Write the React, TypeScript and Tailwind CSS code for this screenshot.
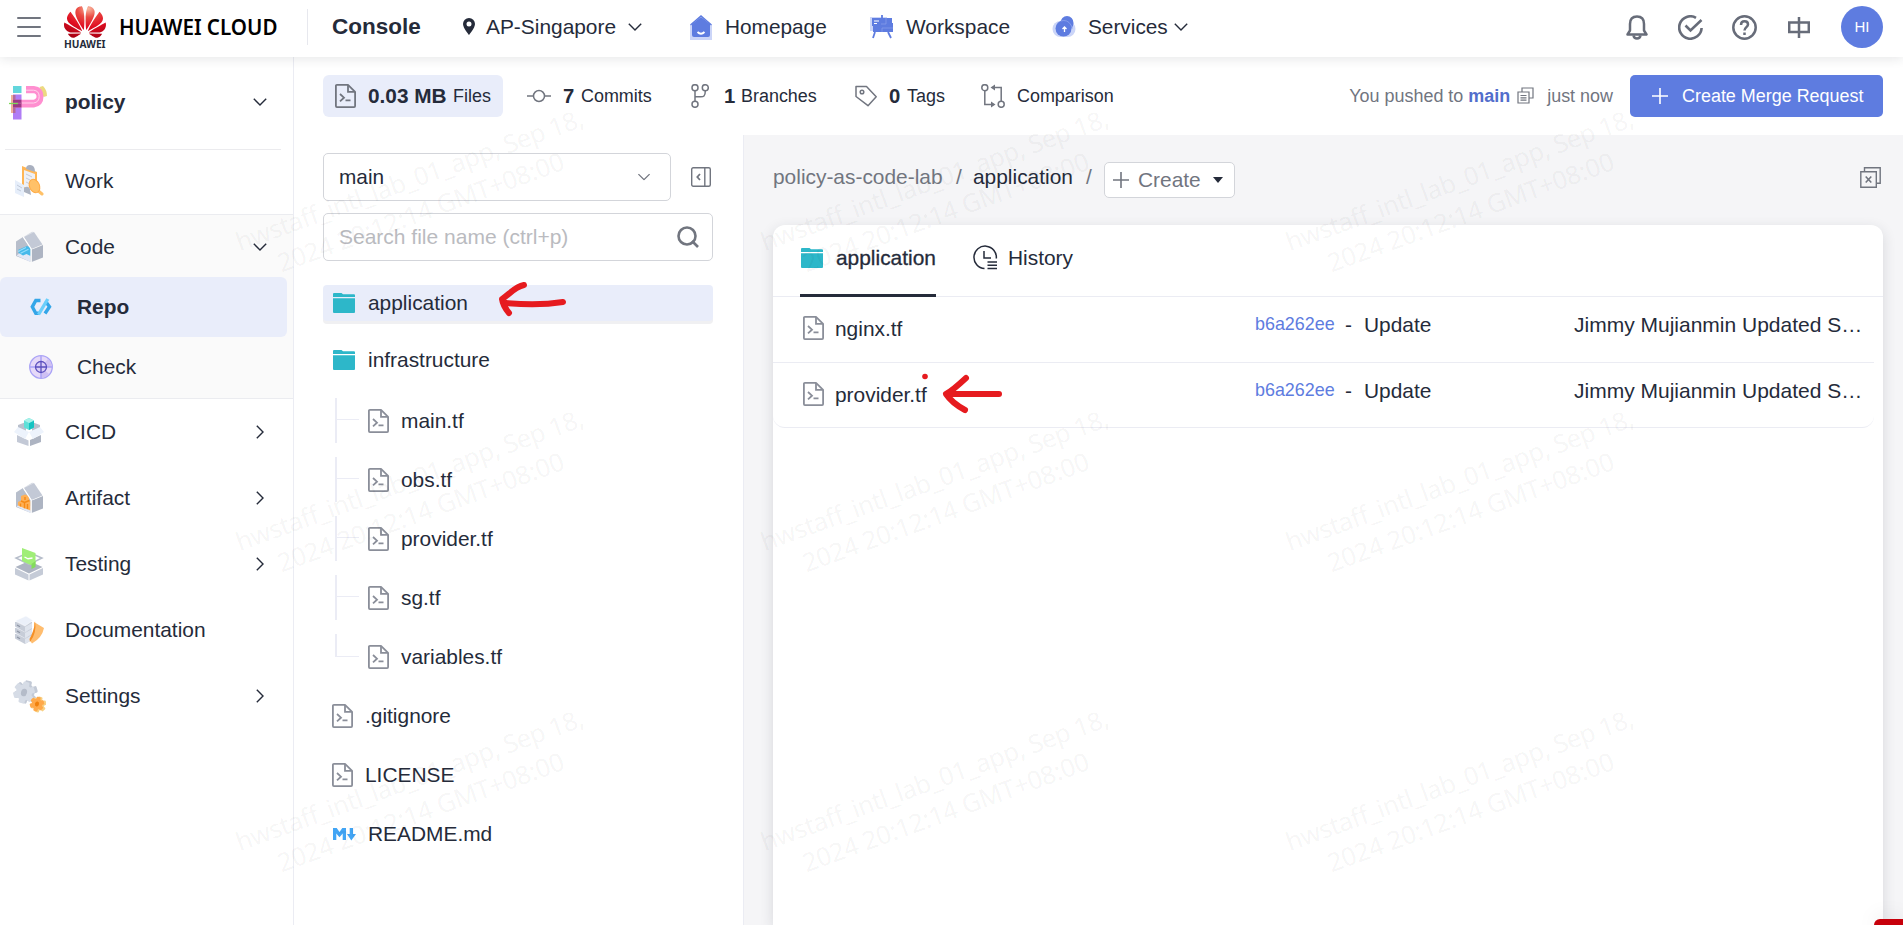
import React from "react";
import { SiHuawei } from "react-icons/si";

type P = { className?: string };

const ChevronDown = ({ className = "" }: P) => (
  <svg viewBox="0 0 14 8" className={`h-2 w-3.5 shrink-0 ${className}`} fill="none" stroke="currentColor" strokeWidth="1.4">
    <path d="M.8.8 7 7 13.2.8" />
  </svg>
);

const ChevronRight = ({ className = "" }: P) => (
  <svg viewBox="0 0 8 14" className={`h-3.5 w-2 shrink-0 ${className}`} fill="none" stroke="currentColor" strokeWidth="1.4">
    <path d="M.8.8 7 7 .8 13.2" />
  </svg>
);

const FileIcon = ({ className = "text-[#8a8e99]" }: P) => (
  <svg viewBox="0 0 21 24" className={`h-6 w-[21px] shrink-0 ${className}`} fill="none" stroke="currentColor" strokeWidth="1.800">
    <path d="M1.900.9H13l7.100 7v14.200a1 1 0 0 1-1 1H1.900a1 1 0 0 1-1-1V1.900a1 1 0 0 1 1-1Z" strokeLinejoin="round" />
    <path d="M13 1v6.800h7" />
    <path d="m5 10 4 3.700-4 3.700M10.500 16.300h5" />
  </svg>
);

const Folder = ({ className = "" }: P) => (
  <svg viewBox="0 0 22 20" className={`h-5 w-[22px] shrink-0 ${className}`} fill="#2db7c9">
    <path d="M1 0h7.500l1.500 1.200H21q1 0 1 1V4H0V1Q0 0 1 0Z" />
    <path d="M0 5.200h22V19q0 1-1 1H1q-1 0-1-1Z" />
  </svg>
);

const Menu = () => (
  <svg viewBox="0 0 24 22" className="h-[22px] w-6" stroke="#71757f" strokeWidth="2" strokeLinecap="round">
    <path d="M1 2h22M1 11h22M1 20h22" />
  </svg>
);

const PolicyLogo = () => (
  <svg viewBox="0 0 40 36" className="h-9 w-10 shrink-0">
    <path d="M30.500 2 34 1q4 4 4 10l-3.500 1Z" fill="#ecd980" />
    <rect x="4" y="1" width="8.500" height="7" fill="#62d6dc" />
    <rect x="4" y="9.500" width="8.500" height="25" fill="#b07df5" />
    <rect x="2" y="10" width="2.500" height="18" fill="#f2b09a" />
    <rect x="4" y="10" width="2.500" height="18" fill="#b36a9c" />
    <path d="M17 1h8q9.500 1 9.500 10.500T25 22.500H4v-7.800h20.500q3-.7 3-3.200 0-2.800-3-3.200H17Z" fill="#ff8fd0" />
    <path d="M17 5.200h7.500q5.700.5 5.700 6.300t-5.700 6.500H8" fill="none" stroke="#ffd3ec" strokeWidth="1" />
    <path d="M4 14.700h8.500v7.800H4Z" fill="#9c3a85" />
    <path d="M4 18.200h8.500" stroke="#c45ea5" />
    <path d="M0 18.500h9" stroke="#7cd957" strokeWidth="1.300" />
  </svg>
);

const WorkIcon = () => (
  <svg viewBox="0 0 30 32" className="h-8 w-[30px]">
    <path d="M8 1 23 7v20L8 22Z" fill="#ffb655" />
    <path d="m10 5 11 4v17l-11-4Z" fill="#eef0f5" />
    <path d="M12 4q0-4 4-4 5 0 5 7Z" fill="#a9b0bf" />
    <path d="m12 9 6 3m-6 1 6 3m-6 1 4 2" stroke="#c5cad5" />
    <path d="M1 15 10 20v12L1 28Z" fill="#e6eefa" />
    <path d="m3 20 5 3m-5 1 4 2" stroke="#c1cad9" />
    <path d="M10 23q4-3 6 1l1 6-7-3Z" fill="#adb4c1" />
    <path d="m22 24 6 5" stroke="#ffc168" strokeWidth="3" strokeLinecap="round" />
    <ellipse cx="20.500" cy="21" rx="5" ry="7" transform="rotate(-25 20.500 21)" fill="#ffc168" stroke="#ffa941" />
  </svg>
);

const House = ({ children }: { children: React.ReactNode }) => (
  <svg viewBox="0 0 30 32" className="h-8 w-[30px]">
    <path d="M2 10.500 9 6l8 12v13L2 25Z" fill="#b7becb" />
    <path d="m2.500 24.500 6-4.500 8 4v7Z" fill="#e1e8f6" />
    {children}
    <path d="m17.500 18.500 3-1L29 14v12.500L17.500 31Z" fill="#adb4c2" />
    <path d="M2 10.500 18 .8l2 .2L9.500 6Z" fill="#d5dae3" />
    <path d="M9.800 6 20 1l8.500 12.500-11 4.500Z" fill="#c3c9d6" />
    <path d="m9.300 6 7.800 12v13" fill="none" stroke="#fff" strokeWidth="1.200" />
  </svg>
);

const CodeIcon = () => (
  <House>
    <path d="m4 19 9-4 3.500 1.500V25l-4-2-3.500 1.500-5-3 2-.8Z" fill="#45b9ea" />
    <path d="m4 20.500 8-4m-5.500 5.700 8-4" stroke="#92ddfc" strokeWidth="1.200" />
  </House>
);

const ArtifactIcon = () => (
  <House>
    <path d="m4 20 3-1.500V14l4-1.500 4 1.500v4.500l1.500.7V28.500L11 26.500l-7-3Z" fill="#ffb056" />
    <path d="M10.500 20v6.300M7 19l3.500 1.500 5-2M6.500 24.500v-3M13.500 27v-5M11 18v-3" fill="none" stroke="#f58a17" strokeWidth="1.400" />
  </House>
);

const RepoIcon = () => (
  <svg viewBox="0 0 22 18" className="h-[18px] w-[22px]" fill="none" strokeWidth="3.400">
    <path d="M10.500 2.500H5.800L2.300 8.800l3.500 6.400h3" stroke="#34a6e8" />
    <path d="m15.500 3.200 4 5.500-4.500 6.800" stroke="#34a6e8" />
    <path d="m17.800 1-9.300 15.500" stroke="#6bcffb" />
  </svg>
);

const CheckIcon = () => (
  <svg viewBox="0 0 24 24" className="size-6">
    <circle cx="12" cy="12" r="11.300" fill="#e6d9f8" stroke="#aaa3f6" strokeWidth="1.300" />
    <path d="M12 12h11A11 11 0 0 0 19 4ZM12 12v11a11 11 0 0 0 8-4Z" fill="#cfc0f3" />
    <path d="M12 1v22M1 12h22" stroke="#aaa3f6" strokeWidth="1.500" />
    <circle cx="12" cy="12" r="5.500" fill="#dacdf7" stroke="#5b4fbe" strokeWidth="1.300" />
    <path d="M12 6v12M6 12h12" stroke="#5b4fbe" strokeWidth="1.300" />
  </svg>
);

const CicdIcon = () => (
  <svg viewBox="0 0 30 30" className="h-[30px] w-[30px]">
    <path d="m4 8 8-3v9L4 12ZM26 8l-8-3v9l8-2Z" fill="#b9c0cd" />
    <path d="m3 18 11.500 5.500V29L3 25Z" fill="#c3c9d6" />
    <path d="m27 18-11 5v6l11-4Z" fill="#adb4c2" />
    <path d="M4 10 15 15l-4 7L0 15ZM26 10l-11 5 4 7 11-7Z" fill="#edf3fc" />
    <path d="m15 1 5 2.500v7L15 13l-5-2.500v-7Z" fill="#5fe0d8" />
    <path d="m15 6 5-2.500v7L15 13Z" fill="#14c3c2" />
    <path d="m15 1 5 2.500L15 6l-5-2.500Z" fill="#a9f1e9" />
  </svg>
);

const TestingIcon = () => (
  <svg viewBox="0 0 30 34" className="h-[34px] w-[30px]">
    <path d="m15 14 13.500 6L15 26.500 1.500 20Z" fill="#adb4c2" />
    <path d="m1 21 13.500 6.500v6L1 27.500Z" fill="#c5cbd7" />
    <path d="M29 21 15.500 27.500v6L29 27.500Z" fill="#c5cbd7" />
    <path d="m15 5.500 13 5.500-13 6.500L2 11Z" fill="#fff" stroke="#b6bdca" strokeWidth="1.500" />
    <path d="m8 1 13.500 5v11l-5 1L8 14Z" fill="#a0ee77" />
    <path d="M17.500 17v5l4-2v-6Z" fill="#83dc5b" />
    <path d="m10.500 10 3.500 1.800 4.500-.8" fill="none" stroke="#fff" strokeWidth="1.400" />
  </svg>
);

const DocsIcon = () => (
  <svg viewBox="0 0 30 28" className="h-7 w-[30px]">
    {[12, 6, 0].map((y) => (
      <g key={y} transform={`translate(0 ${y})`}>
        <path d="M1 6v4.500l10 5.500 7-4V6Z" fill="#c7cdd8" />
        <path d="m11 11 7-4v5l-7 4Z" fill="#dfe4ed" />
        <path d="m1 5 11-5 7 4.500-8 5.500Z" fill="#ebf0f9" stroke="#fff" strokeWidth=".5" />
        <path d="M3 9 6 10.800" stroke="#8f97a6" strokeWidth="1.300" />
      </g>
    ))}
    <path d="m20 6 10 6q-2 10-12 15.500l-2-3Q21 16 20 6Z" fill="#ffbd6f" />
    <path d="M21 5q2 12-5 21l-.5-3Q20.500 14 21 5Z" fill="#f58f25" />
  </svg>
);

const Gear = ({ fill, hub, x, y, s }: { fill: string; hub: string; x: number; y: number; s: number }) => (
  <g transform={`translate(${x} ${y}) rotate(15) scale(${s})`}>
    {[0, 60, 120].map((a) => (
      <rect key={a} x="-3.500" y="-12" width="7" height="24" rx="1.500" fill={fill} transform={`rotate(${a})`} />
    ))}
    <circle r="9" fill={fill} />
    <ellipse rx="3.300" ry="4.300" fill={hub} />
  </g>
);

const SettingsIcon = () => (
  <svg viewBox="0 0 33 34" className="-ml-px h-[34px] w-[33px]">
    <Gear fill="#c3cad6" hub="#aab1be" x={13} y={13} s={0.96} />
    <Gear fill="#d6dce6" hub="#b5bcc9" x={11} y={13.500} s={0.9} />
    <Gear fill="#f8d083" hub="#f58a1c" x={25.500} y={25.500} s={0.66} />
    <Gear fill="#ffa94a" hub="#f0800c" x={24} y={25} s={0.6} />
  </svg>
);

const HomeNav = () => (
  <svg viewBox="0 0 22 25" className="h-[25px] w-[22px] shrink-0">
    <path d="M0 10h22v15H0Z" fill="#cbd5f8" />
    <path d="M2 9 11 2l9 7v11q0 2-2 2H4q-2 0-2-2Z" fill="#5e7ce0" />
    <path d="M.5 10 11 1l10.500 9" fill="none" stroke="#5e7ce0" strokeWidth="1.500" />
    <path d="M7.500 17q3.500 3.500 7 0" fill="none" stroke="#fff" strokeWidth="1.800" />
  </svg>
);

const WorkspaceNav = () => (
  <svg viewBox="0 0 24 24" className="size-6 shrink-0">
    <path d="M0 2h17v14H0Z" fill="#cbd5f8" />
    <path d="M2 3h20v5h1v9H3v-6H2Z" fill="#5e7ce0" />
    <path d="M12 0v4M5 17l-2 6M18 17l3 6" stroke="#5e7ce0" strokeWidth="1.800" />
    <path d="M4 6h5M4 8.500h3" stroke="#fff" />
    <path d="M11 9h5V3M12 17v-4h11" fill="none" stroke="#91a5ec" strokeWidth=".6" />
  </svg>
);

const ServicesNav = () => (
  <svg viewBox="0 0 24 22" className="h-[22px] w-6 shrink-0">
    <rect x=".5" y="5" width="23" height="16" rx="8" fill="#cbd5f8" />
    <ellipse cx="15" cy="7" rx="6.500" ry="7" fill="#5e7ce0" />
    <circle cx="11.500" cy="12.500" r="8" fill="#5e7ce0" />
    <path d="M8.500 5q7-2 10.500 4l1.500 3.500" fill="none" stroke="#91a5ec" strokeWidth=".8" />
    <path d="M12.500 16V11m-2 2 2-2 2 2" fill="none" stroke="#fff" strokeWidth="1.300" />
  </svg>
);

const Header = () => (
  <header className="relative z-10 flex h-[57px] shrink-0 items-center bg-white pr-5 pb-[3px] text-[20.800px] text-[#252b3a] shadow-[0_2px_10px_rgba(37,43,58,0.11)]">
    <div className="flex w-16 items-center pl-[17px]"><Menu /></div>
    <div className="-mt-[3px] flex w-[55px] flex-col items-start">
      <svg className="absolute size-0">
        <defs>
          <radialGradient id="petal" cx=".58" cy=".08" r=".95">
            <stop offset="0" stopColor="#f9b9a0" />
            <stop offset=".28" stopColor="#ea4a42" />
            <stop offset=".6" stopColor="#e00f22" />
            <stop offset="1" stopColor="#a90012" />
          </radialGradient>
        </defs>
      </svg>
      <SiHuawei fill="url(#petal)" className="mt-[-2px] mb-[-4px] size-[42px]" />
      <span className="w-[43px] font-['Noto_Sans',sans-serif] text-[10.200px] leading-[10px] font-bold">HUAWEI</span>
    </div>
    <div className="w-[188px] font-['Noto_Sans',sans-serif] text-[20.600px] font-semibold whitespace-nowrap text-black">HUAWEI CLOUD</div>
    <div className="h-9 w-px bg-[#e7e8ee]" />
    <div className="w-[155px] pl-6 text-[22.500px] font-bold">Console</div>
    <svg viewBox="0 0 12 17" className="-mt-0.5 h-[17px] w-3" fill="#252b3a">
      <path fillRule="evenodd" d="M6 0a6 6 0 0 1 6 6c0 4-6 11-6 11S0 10 0 6a6 6 0 0 1 6-6Zm0 3.500a2.500 2.500 0 1 0 0 5 2.500 2.500 0 0 0 0-5Z" />
    </svg>
    <div className="w-[153px] pl-[11px] text-[20.900px]">AP-Singapore</div>
    <ChevronDown className="mr-12" />
    <HomeNav />
    <span className="w-[158px] pl-[13px]">Homepage</span>
    <WorkspaceNav />
    <span className="w-[158px] pl-3 text-[20.900px]">Workspace</span>
    <ServicesNav />
    <span className="w-[98px] pl-3">Services</span>
    <ChevronDown />
    <div className="ml-auto flex items-center text-[#676c79]">
      <svg viewBox="0 0 22 25" className="mr-[30px] h-[25px] w-[22px]" fill="none" stroke="currentColor" strokeWidth="2.500">
        <path d="M1.500 19.500 4 15.500V9q0-7.500 7-7.500T18 9v6.500l2.500 4Z" strokeLinejoin="round" />
        <path d="M7.500 20.500q.5 3 3.500 3t3.500-3" />
      </svg>
      <svg viewBox="0 0 25 25" className="mr-[29px] size-[25px]" fill="none" stroke="currentColor" strokeWidth="2.600">
        <path d="M18 2.800A11.200 11.200 0 1 0 23.600 13" />
        <path d="m7.500 10.500 5 5L23.500 5" />
      </svg>
      <svg viewBox="0 0 25 25" className="mr-[31px] size-[25px]" fill="none" stroke="currentColor" strokeWidth="2.500">
        <circle cx="12.500" cy="12.500" r="11.200" />
        <path d="M9 10q0-3.700 3.500-3.700T16 9.500c0 2.600-3.500 2.700-3.500 6M12.500 17.500V20" />
      </svg>
      <svg viewBox="0 0 22 21" className="mr-[31px] h-[21px] w-[22px]" fill="none" stroke="currentColor" strokeWidth="2.500">
        <path d="M1.200 5.500h19.600v9.500H1.200ZM11 0v21" />
      </svg>
      <div className="flex size-[42px] items-center justify-center rounded-full bg-[#5e7ce0] text-[15px] text-white">HI</div>
    </div>
  </header>
);

const SideRow = ({ icon, label, chevron }: { icon: React.ReactNode; label: string; chevron?: boolean }) => (
  <div className="flex h-[66px] items-center">
    <div className="flex w-[65px] items-center pl-3.5">{icon}</div>
    <span className="grow">{label}</span>
    {chevron && <ChevronRight className="mr-[29px]" />}
  </div>
);

const Sidebar = () => (
  <aside className="w-[294px] shrink-0 border-r border-[#ebecf3] bg-white text-[20.900px]">
    <div className="flex h-[92px] items-center">
      <div className="w-[65px] pl-[9px]"><PolicyLogo /></div>
      <span className="grow pb-0.5 font-bold">policy</span>
      <ChevronDown className="mr-[26px] mb-0.5" />
    </div>
    <div className="mr-3 ml-[5px] h-px bg-[#ebebee]" />
    <div className="flex h-16 items-center pb-0.5">
      <div className="w-[65px] pl-3.5"><WorkIcon /></div>
      Work
    </div>
    <div className="h-[185px] border-y border-[#ebecf0] bg-[#fafafa]">
      <div className="flex h-[62px] items-center pt-0.5">
        <div className="w-[65px] pl-3.5"><CodeIcon /></div>
        <span className="grow">Code</span>
        <ChevronDown className="mr-[26px]" />
      </div>
      <div className="mr-1.5 flex h-[60px] items-center rounded-md bg-[#e9edfa] font-bold">
        <div className="w-[77px] pl-[30px]"><RepoIcon /></div>
        Repo
      </div>
      <div className="flex h-[60px] items-center">
        <div className="w-[77px] pl-[29px]"><CheckIcon /></div>
        Check
      </div>
    </div>
    <SideRow icon={<CicdIcon />} label="CICD" chevron />
    <SideRow icon={<ArtifactIcon />} label="Artifact" chevron />
    <SideRow icon={<TestingIcon />} label="Testing" chevron />
    <SideRow icon={<DocsIcon />} label="Documentation" />
    <SideRow icon={<SettingsIcon />} label="Settings" chevron />
  </aside>
);

const Stats = () => (
  <div className="flex h-[78px] shrink-0 items-center bg-white pr-5 pl-[29px] text-[17.950px] text-[#252b3a]">
    <div className="flex h-[42px] w-[180px] items-center rounded-md bg-[#e9edfa] pl-3">
      <FileIcon className="text-[#71757f]" />
      <b className="ml-3 w-[85px] text-[20.800px] whitespace-nowrap">0.03 MB</b>
      <span>Files</span>
    </div>
    <svg viewBox="0 0 24 24" className="ml-6 size-6" fill="none" stroke="#71757f" strokeWidth="1.500">
      <circle cx="12" cy="12" r="5.500" />
      <path d="M0 12h6.500M17.500 12H24" />
    </svg>
    <b className="w-[30px] pl-3 text-[20.300px]">7</b>
    <span className="w-[110px]">Commits</span>
    <svg viewBox="0 0 18 24" className="h-6 w-[18px]" fill="none" stroke="#71757f" strokeWidth="1.500">
      <circle cx="4" cy="3.700" r="3" />
      <circle cx="14.300" cy="3.700" r="3" />
      <circle cx="4" cy="20.300" r="3" />
      <path d="M4 6.700v10.600M14.300 6.700c0 6-2 6-4.500 6H4" />
    </svg>
    <b className="w-8 pl-[15px] text-[20.300px]">1</b>
    <span className="w-[114px]">Branches</span>
    <svg viewBox="0 0 22 22" className="size-[22px]" fill="none" stroke="#71757f" strokeWidth="1.500" strokeLinejoin="round">
      <path d="M1 1.500h10.500l9.700 10.200-8.200 9L1 11.500Z" />
      <circle cx="7" cy="7" r="1.800" />
    </svg>
    <b className="w-[30px] pl-3 text-[20.300px]">0</b>
    <span className="w-[74px]">Tags</span>
    <svg viewBox="0 0 24 24" className="size-6" fill="none" stroke="#71757f" strokeWidth="1.500">
      <circle cx="3.800" cy="3.700" r="3" />
      <circle cx="20.200" cy="20.300" r="3" />
      <path d="M3.800 6.700V20.500H11M20.200 17.300V3.500H13" />
      <path d="m10 17.500 4.500 3-4.500 3ZM14 .5l-4.500 3 4.500 3Z" fill="#71757f" stroke="none" />
    </svg>
    <span className="pl-3">Comparison</span>
    <div className="ml-auto flex items-center text-[#71757f]">
      You pushed to&nbsp;<b className="text-[#526ecc]">main</b>
      <svg viewBox="0 0 17 17" className="mr-[13px] ml-[7px] size-[17px] -translate-y-px" fill="none" stroke="#71757f" strokeWidth="1.200">
        <path d="M5 5V1h11v10h-4M1 5h11v11H1ZM3.500 8.500h6M3.500 10.800h6M3.500 13.200h6" />
      </svg>
      just now
      <button className="ml-[17px] flex h-[42px] w-[253px] items-center rounded-[5px] bg-[#5e7ce0] pl-[22px] text-white">
        <svg viewBox="0 0 16 16" className="mr-3.5 size-4" stroke="#fff" strokeWidth="1.600"><path d="M0 8h16M8 0v16" /></svg>
        Create Merge Request
      </button>
    </div>
  </div>
);

const TreeFile = ({ name, last }: { name: string; last?: boolean }) => (
  <div className="flex h-[59px] items-center">
    <div className="ml-3 h-[45px] w-[33px]">
      <div className={`w-0.5 bg-[#ebecf5] ${last ? "h-[23px]" : "h-full"}`} />
      <div className={`ml-0.5 h-px w-[22px] bg-[#ebecf5] ${last ? "-mt-px" : "-mt-6"}`} />
    </div>
    <FileIcon />
    <span className="pl-3">{name}</span>
  </div>
);

const RootFile = ({ name }: { name: string }) => (
  <div className="flex h-[59px] items-center pl-[9px]">
    <FileIcon />
    <span className="pl-3">{name}</span>
  </div>
);

const Tree = () => (
  <section className="flex w-[450px] shrink-0 flex-col border-r border-[#ebecf3] bg-white pt-[18px] pl-[29px] text-[20.900px]">
    <div className="flex items-center">
      <div className="flex h-12 w-[348px] items-center justify-between rounded-[5px] border border-[#d3d5da] pr-[19px] pl-[15px] text-[20.800px]">
        main
        <ChevronDown className="scale-90 text-[#71757f]" />
      </div>
      <svg viewBox="0 0 20 20" className="ml-5 size-5" fill="none" stroke="#71757f" strokeWidth="1.400">
        <rect x=".7" y=".7" width="18.600" height="18.600" rx="1.500" />
        <path d="M13.800 1v18" />
        <path d="M9 7 6.300 10 9 13" strokeWidth="1.800" />
      </svg>
    </div>
    <div className="mt-3 flex h-12 w-[390px] items-center justify-between rounded-[5px] border border-[#d3d5da] pr-[13px] pl-[15px] text-[21px] text-[#babbc0]">
      Search file name (ctrl+p)
      <svg viewBox="0 0 22 22" className="size-[22px]" fill="none" stroke="#71757f" strokeWidth="2.600">
        <circle cx="10" cy="10" r="8.500" />
        <path d="m15 15 6 6" />
      </svg>
    </div>
    <div className="mt-6 flex h-9 w-[390px] items-center rounded bg-[#e9edfa] pl-2.5 shadow-[0_3px_0_#f0f0f2]">
      <Folder />
      <span className="pl-[13px]">application</span>
    </div>
    <div className="mt-[9px] flex h-[60px] items-center pl-2.5">
      <Folder />
      <span className="pl-[13px]">infrastructure</span>
    </div>
    <div className="mt-[1px]">
      <TreeFile name="main.tf" />
      <TreeFile name="obs.tf" />
      <TreeFile name="provider.tf" />
      <TreeFile name="sg.tf" />
      <TreeFile name="variables.tf" last />
      <RootFile name=".gitignore" />
      <RootFile name="LICENSE" />
      <div className="flex h-[59px] items-center pl-2.5">
        <svg viewBox="0 0 23 14" className="h-3.5 w-[23px]" fill="#42a5f5">
          <path d="M0 13V1h3.700l2.800 4 2.800-4H13v12H9.700V6.500L6.500 10.200 3.300 6.500V13ZM16.700 1H20v6h3l-4.700 6.500L14 7h2.700Z" />
        </svg>
        <span className="pl-3">README.md</span>
      </div>
    </div>
  </section>
);

const Row = ({ name, tall }: { name: string; tall?: boolean }) => (
  <div className={`mr-[9px] flex items-center border-b border-[#ebecf3] ${tall ? "h-[66px] pb-px" : "h-[65px] rounded-b-xl"}`}>
    <div className="flex w-[482px] items-center pb-px pl-[30px]">
      <FileIcon />
      <span className="pl-[11px]">{name}</span>
    </div>
    <div className="flex grow items-center pb-[9px]">
      <span className="w-[90px] text-[17.900px] text-[#5e7ce0]">b6a262ee</span>
      <span className="w-[19px]">-</span>
      <span className="w-[210px]">Update</span>
      <span className="text-[21px] whitespace-nowrap">Jimmy Mujianmin Updated S…</span>
    </div>
  </div>
);

const Main = () => (
  <main className="flex min-w-0 grow flex-col bg-[#f5f5f7] pr-5 pl-[29px] text-[20.900px]">
    <div className="flex h-[90px] shrink-0 items-center pb-1.5 text-[#71757f]">
      <span className="w-[183px]">policy-as-code-lab</span>
      <span className="w-[17px]">/</span>
      <span className="w-[113px] text-[#252b3a]">application</span>
      <span className="w-[18px]">/</span>
      <div className="mt-1.5 flex h-9 w-[131px] items-center rounded-[5px] border border-[#d3d5da] bg-white pl-2">
        <svg viewBox="0 0 16 16" className="mr-[9px] size-4" stroke="#71757f" strokeWidth="1.600"><path d="M0 8h16M8 0v16" /></svg>
        Create
        <svg viewBox="0 0 10 6" className="ml-3 h-1.5 w-2.5" fill="#252b3a"><path d="M0 0h10L5 6Z" /></svg>
      </div>
      <svg viewBox="0 0 21 21" className="mr-0.5 ml-auto size-[21px]" fill="none" stroke="#71757f" strokeWidth="1.400">
        <path d="M4.500 4.500V.8h15.700v15.500h-3.700M.8 4.700h15.500v15.500H.8Z" />
        <path d="m5.700 9.500 5.600 6m0-6-5.600 6" strokeWidth="1.600" />
      </svg>
    </div>
    <div className="grow rounded-t-xl bg-white shadow-[0_4px_14px_rgba(37,43,58,0.14)]">
      <div className="flex h-[72px] items-stretch border-b border-[#ebecf3] pl-[27px]">
        <div className="-mb-px flex w-[136px] items-center border-b-3 border-[#252b3a] pb-1 [-webkit-text-stroke:0.3px_#252b3a]">
          <Folder className="ml-px" />
          <span className="pl-[13px]">application</span>
        </div>
        <div className="flex items-center pb-1.5 pl-9">
          <svg viewBox="0 0 26 25" className="h-[25px] w-[26px]" fill="none" stroke="#252b3a" strokeWidth="1.500">
            <path d="M12.500 23.500A11.200 11.200 0 1 1 24.300 13.500" />
            <path d="M12 6v7h7M15.500 17h9.500M15.500 20.300h9.500M15.500 23.500h9.500" />
          </svg>
          <span className="pl-2.5">History</span>
        </div>
      </div>
      <Row name="nginx.tf" tall />
      <Row name="provider.tf" />
    </div>
  </main>
);

const marks = [235, 760, 1285].flatMap((x) => [250, 550, 850].map((y) => ({ x, y })));

const Overlay = () => (
  <svg viewBox="0 0 1903 925" className="pointer-events-none absolute inset-0 z-20 h-[925px] w-[1903px]">
    <g fill="#000" fillOpacity=".05" stroke="#000" strokeOpacity=".02" strokeWidth=".5" fontSize="25.500" className="font-['Noto_Sans',sans-serif]">
      {marks.map(({ x, y }) => (
        <g key={`${x}-${y}`} transform={`translate(${x} ${y}) rotate(-20)`}>
          <text x="4" y="3" textLength="368">hwstaff_intl_lab_01_app, Sep 18,</text>
          <text x="36" y="37" textLength="303">2024 20:12:14 GMT+08:00</text>
        </g>
      ))}
    </g>
    <g fill="none" stroke="#e61b1f" strokeWidth="6" strokeLinecap="round" strokeLinejoin="round">
      <path d="M524 285C514 287 509 295 502 299Q503 306 509 313" />
      <path d="M506 303Q538 306 563 302" />
      <path d="M966 378Q952 391 946 394Q952 403 965 410" />
      <path d="M949 394H999" />
    </g>
    <circle cx="925" cy="376.500" r="2.800" fill="#e61b1f" />
  </svg>
);

export default function App() {
  return (
    <div className="relative flex h-[925px] w-[1903px] flex-col overflow-hidden bg-white font-['Liberation_Sans',Arial,sans-serif] text-[#252b3a]">
      <Header />
      <div className="flex min-h-0 grow">
        <Sidebar />
        <div className="flex min-w-0 grow flex-col">
          <Stats />
          <div className="flex min-h-0 grow">
            <Tree />
            <Main />
          </div>
        </div>
      </div>
      <Overlay />
      <div className="absolute right-0 bottom-0 z-30 h-1.5 w-[29px] rounded-tl-md bg-[#c7000b] shadow-[0_0_20px_rgba(0,0,0,0.15)]" />
    </div>
  );
}
